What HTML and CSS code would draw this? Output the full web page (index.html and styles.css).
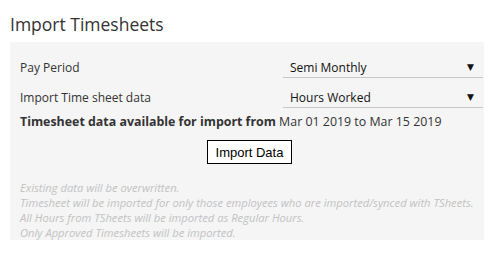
FILE: index.html
```html
<!DOCTYPE html>
<html>
<head>
<meta charset="utf-8">
<link rel="stylesheet" href="styles.css">
</head>
<body>
<h1 class="title">Import Timesheets</h1>
<div class="panel">
  <div class="form">
    <div class="label">Pay Period</div>
    <div class="select"><span>Semi Monthly</span><span class="arrow">▼</span></div>
    <div class="label">Import Time sheet data</div>
    <div class="select"><span>Hours Worked</span><span class="arrow">▼</span></div>
  </div>
  <p class="avail"><b>Timesheet data available for import from</b> Mar 01 2019 to Mar 15 2019</p>
  <div class="actions"><button class="btn">Import Data</button></div>
  <div class="notes">
    <div>Existing data will be overwritten.</div>
    <div>Timesheet will be imported for only those employees who are imported/synced with TSheets.</div>
    <div>All Hours from TSheets will be imported as Regular Hours.</div>
    <div>Only Approved Timesheets will be imported.</div>
  </div>
</div>
</body>
</html>
```
FILE: styles.css
```css
html, body {
  margin: 0;
  padding: 0;
  background: #fff;
}
body {
  font-family: "Open Sans", "DejaVu Sans", sans-serif;
  color: #333;
  width: 499px;
}
.title {
  margin: 0;
  padding: 12px 0 0 10px;
  height: 42px;
  box-sizing: border-box;
  font-size: 17.5px;
  font-weight: normal;
  line-height: 24px;
  color: #333;
}
.panel {
  margin-left: 10px;
  width: 474px;
  height: 198px;
  box-sizing: border-box;
  background: #f5f5f5;
  padding: 15px 1px 0 10px;
}
.form {
  display: grid;
  grid-template-columns: 1fr 200px;
  row-gap: 9px;
  align-items: center;
}
.label {
  font-size: 12px;
  line-height: 20px;
  padding-top: 1px;
}
.select {
  height: 21px;
  box-sizing: border-box;
  border-bottom: 1px solid #c8c8c8;
  display: flex;
  justify-content: space-between;
  align-items: center;
  padding: 0 7px;
  font-size: 12px;
  color: #111;
}
.arrow {
  font-size: 9px;
  font-family: "DejaVu Sans", sans-serif;
  color: #111;
  padding-right: 2px;
}
.avail {
  margin: 5px 0 0;
  font-size: 12.4px;
  line-height: 18px;
}
.avail b {
  font-weight: bold;
}
.actions {
  display: flex;
  justify-content: center;
  padding-right: 4px;
  margin-top: 9px;
}
.btn {
  height: 24px;
  width: 85px;
  box-sizing: border-box;
  border: 1px solid #000;
  background: #fff;
  font-family: "Liberation Sans", Arial, sans-serif;
  font-size: 13px;
  color: #000;
  padding: 0;
}
.notes {
  margin-top: 16px;
  font-size: 11.2px;
  line-height: 15px;
  font-style: italic;
  color: #c2c2c2;
}
```
